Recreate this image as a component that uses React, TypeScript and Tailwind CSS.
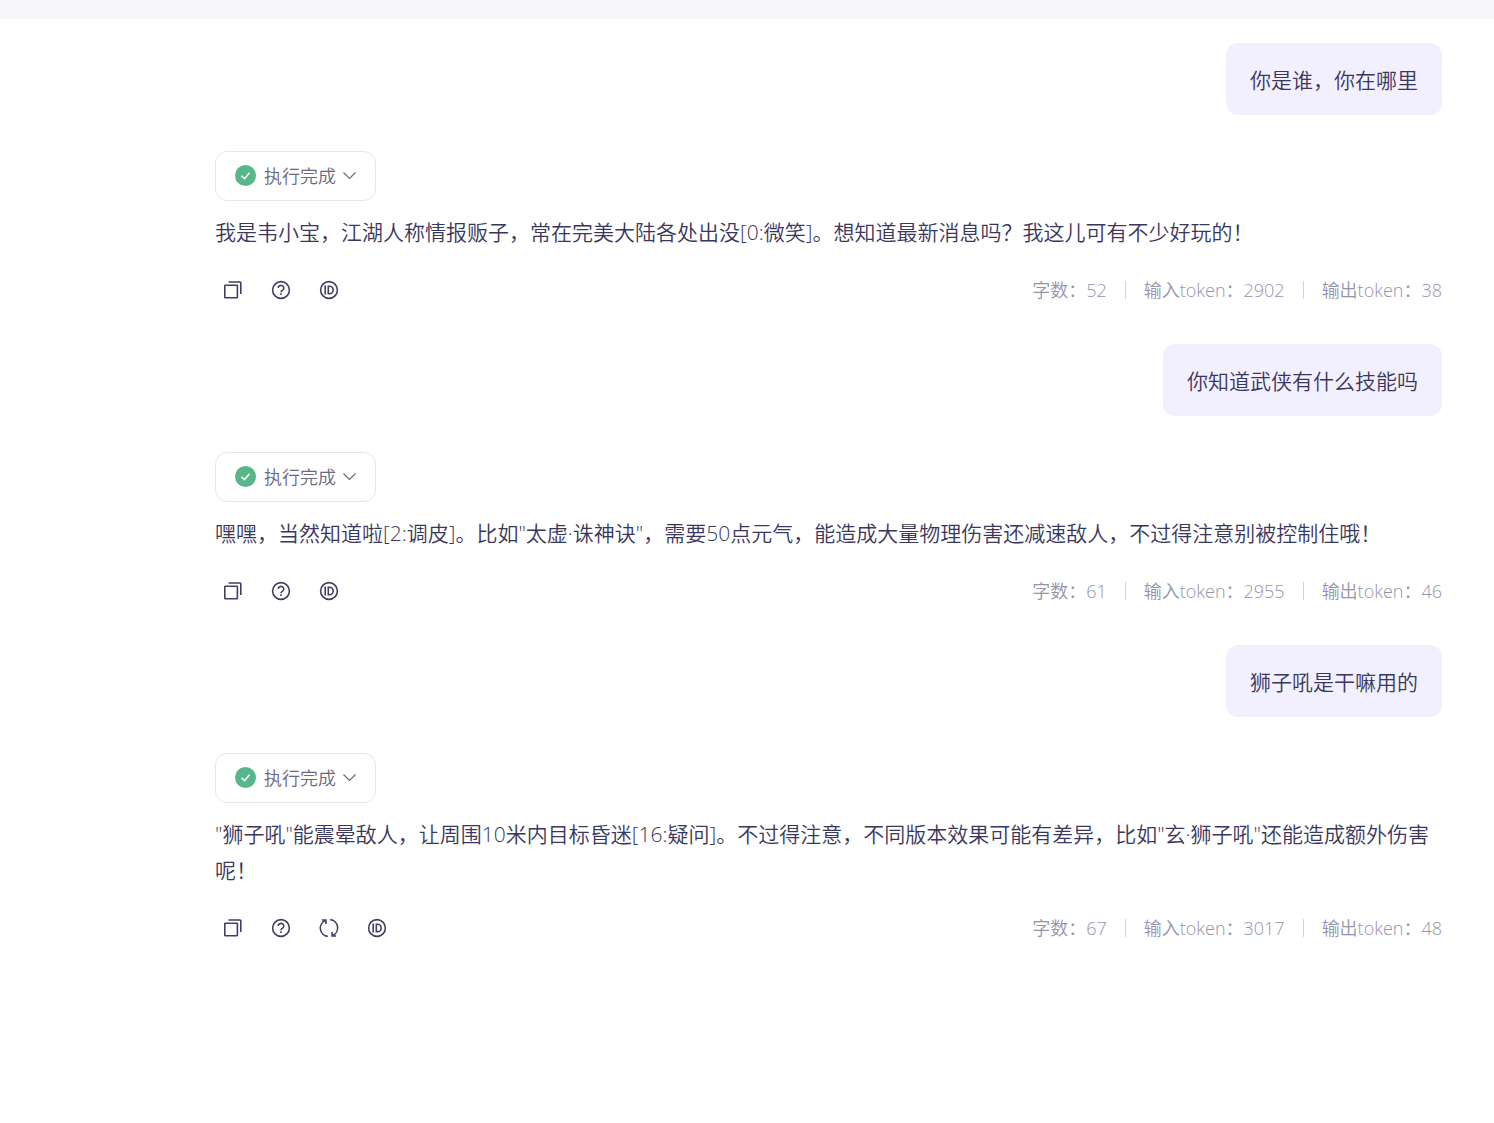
import { Fragment } from "react";

type Exchange = {
  question: string;
  answer: string;
  words: number;
  input: number;
  output: number;
  canRetry?: boolean;
};

const exchanges: Exchange[] = [
  {
    question: "你是谁，你在哪里",
    answer:
      "我是韦小宝，江湖人称情报贩子，常在完美大陆各处出没[0:微笑]。想知道最新消息吗？我这儿可有不少好玩的！",
    words: 52,
    input: 2902,
    output: 38,
  },
  {
    question: "你知道武侠有什么技能吗",
    answer:
      '嘿嘿，当然知道啦[2:调皮]。比如"太虚·诛神诀"，需要50点元气，能造成大量物理伤害还减速敌人，不过得注意别被控制住哦！',
    words: 61,
    input: 2955,
    output: 46,
  },
  {
    question: "狮子吼是干嘛用的",
    answer:
      '"狮子吼"能震晕敌人，让周围10米内目标昏迷[16:疑问]。不过得注意，不同版本效果可能有差异，比如"玄·狮子吼"还能造成额外伤害呢！',
    words: 67,
    input: 3017,
    output: 48,
    canRetry: true,
  },
];

const stroke = {
  width: 20,
  height: 20,
  viewBox: "0 0 20 20",
  fill: "none",
  stroke: "currentColor",
  strokeWidth: 1.6,
  "aria-hidden": true,
} as const;

function CopyIcon() {
  return (
    <svg {...stroke}>
      <rect x="1.8" y="5.2" width="12.6" height="12.6" rx="0.6" />
      <path d="M5.500 2h11.500q.8 0 .8.8V14" />
    </svg>
  );
}

function HelpIcon() {
  return (
    <svg {...stroke}>
      <circle cx="10" cy="10" r="8.4" />
      <path d="M7.2 8a2.8 2.6 0 1 1 4.4 2.1Q10 11 10 12.3" />
      <path d="M10 13.3v1.6" />
    </svg>
  );
}

function RetryIcon() {
  return (
    <svg {...stroke}>
      <path d="M8.8 18.4A8.3 8.3 0 0 1 6.4 2.5" />
      <path d="M2.9 2h4v4" />
      <path d="M11.2 1.6A8.3 8.3 0 0 1 13.6 17.5" />
      <path d="M17.1 18h-4v-4" />
    </svg>
  );
}

function IdIcon() {
  return (
    <svg {...stroke}>
      <circle cx="10" cy="10" r="8.4" />
      <path d="M6.2 5.6v8.8" />
      <path d="M9.3 6.3h1.2a3.7 3.7 0 0 1 0 7.4H9.3z" />
    </svg>
  );
}

const iconButton =
  "flex size-9 cursor-pointer items-center justify-center rounded-md text-[#413e63] hover:bg-gray-100";

function StatusChip() {
  return (
    <button
      type="button"
      className="flex h-[50px] w-fit cursor-pointer items-center gap-1.5 rounded-xl border border-[#e6e5ef] pr-[17px] pl-[18px] text-lg text-[#6b6882]"
    >
      <svg width="24" height="24" viewBox="0 0 24 24" fill="none" aria-hidden="true">
        <circle cx="11.5" cy="11.5" r="10.5" fill="#58b789" />
        <path d="M7.5 11.7l3 3 5-6" stroke="#fff" strokeWidth="1.5" />
      </svg>
      执行完成
      <svg width="16" height="16" viewBox="0 0 16 16" fill="none" stroke="currentColor" strokeWidth="1.2" aria-hidden="true">
        <path d="M1.5 4.5l6 6 6-6" />
      </svg>
    </button>
  );
}

function Stats({ items }: { items: [string, number][] }) {
  return (
    <div className="flex items-center gap-[18px] text-lg text-[#9694ad]">
      {items.map(([label, value], i) => (
        <Fragment key={label}>
          {i > 0 && <span className="h-[18px] w-px bg-[#d3d2de]" />}
          <span>
            {label}：{value}
          </span>
        </Fragment>
      ))}
    </div>
  );
}

export default function App() {
  return (
    <div
      lang="zh-CN"
      className="min-h-screen bg-white font-['Open_Sans','Noto_Sans_CJK_SC',sans-serif] font-[350] text-[#3a375d]"
    >
      <header className="h-[19px] bg-[#f7f7fa]" />
      <main className="flex flex-col gap-9 pt-6 pr-[52px] pb-12 pl-[215px]">
        {exchanges.map((e) => (
          <section key={e.question} className="flex flex-col gap-9">
            <p className="self-end rounded-xl bg-[#f2effe] px-6 pt-[19px] pb-[17px] text-[21px] leading-9">
              {e.question}
            </p>
            <article>
              <StatusChip />
              <p className="mt-[13px] text-[21px] leading-9">{e.answer}</p>
              <div className="mt-[22px] flex items-center justify-between">
                <div className="flex gap-3">
                  <button type="button" aria-label="复制" className={iconButton}>
                    <CopyIcon />
                  </button>
                  <button type="button" aria-label="帮助" className={iconButton}>
                    <HelpIcon />
                  </button>
                  {e.canRetry && (
                    <button type="button" aria-label="重新生成" className={iconButton}>
                      <RetryIcon />
                    </button>
                  )}
                  <button type="button" aria-label="ID" className={iconButton}>
                    <IdIcon />
                  </button>
                </div>
                <Stats
                  items={[
                    ["字数", e.words],
                    ["输入token", e.input],
                    ["输出token", e.output],
                  ]}
                />
              </div>
            </article>
          </section>
        ))}
      </main>
    </div>
  );
}
